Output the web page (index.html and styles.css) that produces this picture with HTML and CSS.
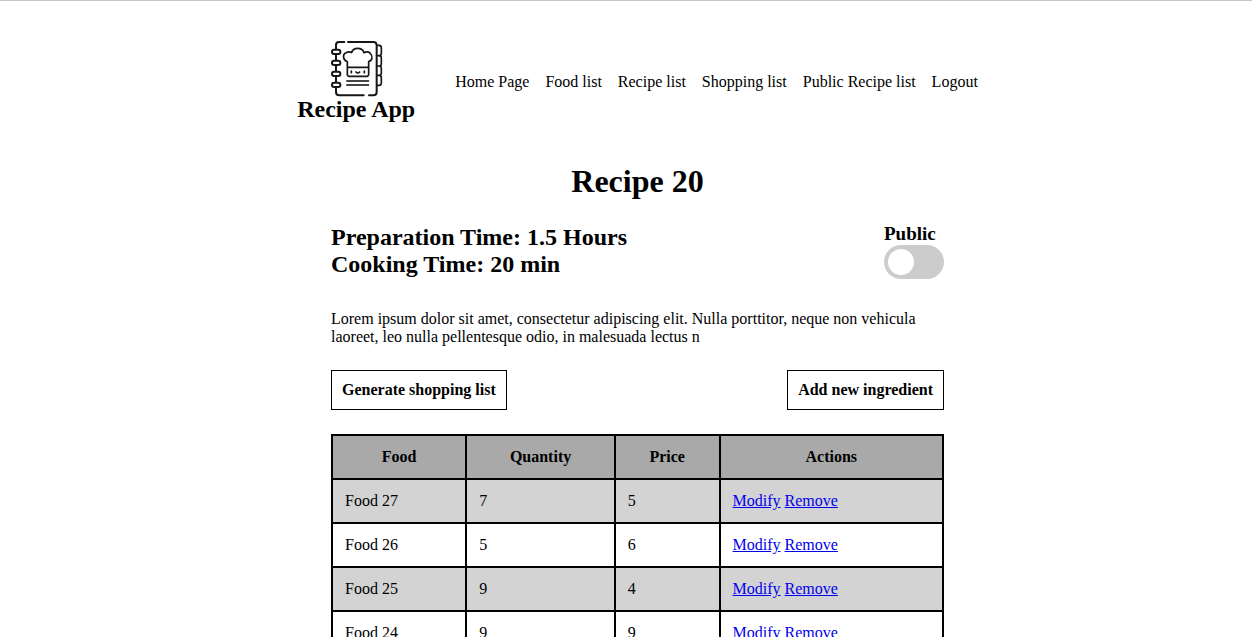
FILE: index.html
```html
<!DOCTYPE html>
<html lang="en">
<head>
<meta charset="utf-8">
<meta name="viewport" content="width=device-width, initial-scale=1">
<title>Recipe App</title>
<link rel="stylesheet" href="styles.css">
</head>
<body>
<header class="site-header">
  <div class="brand">
    <svg class="logo" viewBox="27 15 162 168" aria-hidden="true" fill="none" stroke="#161616" stroke-width="6" stroke-linecap="round" stroke-linejoin="round">
      <path d="M48 42V30Q48 21 57 21H73M84 21H160Q170 21 170 31V171Q170 181 160 181H147M131 181H58Q48 181 48 171V159M48 60V74M48 93V107M48 126V140"/>
      <rect x="36" y="44" width="25" height="13" rx="6"/>
      <rect x="36" y="77" width="25" height="13" rx="6"/>
      <rect x="36" y="110" width="25" height="13" rx="6"/>
      <rect x="36" y="143" width="25" height="13" rx="6"/>
      <path d="M172 31H177Q184 31 184 38V55Q184 62 177 62H172M177 62Q184 62 184 69V86Q184 93 177 93H172M177 93Q184 93 184 100V114Q184 121 177 121H172M177 121Q184 121 184 128V143Q184 151 177 151H172" stroke-width="5"/>
      <path d="M82 98V80C68 75 67 57 78 53Q87 48 95 53C99 36 127 36 132 53Q143 48 150 54C160 64 157 77 146 80V118Q146 124 140 124H88Q82 124 82 118V98M82 97H146" stroke-width="5"/>
      <path d="M94 108V113M133 108V113M108 111Q113 117 119 111" stroke-width="5"/>
      <path d="M81 138H145M81 150H145" stroke="#444" stroke-width="6"/>
    </svg>
    <h2 class="brand-name">Recipe App</h2>
  </div>
  <nav class="site-nav" aria-label="Main">
    <a href="#home">Home Page</a>
    <a href="#foods">Food list</a>
    <a href="#recipes">Recipe list</a>
    <a href="#shopping">Shopping list</a>
    <a href="#public">Public Recipe list</a>
    <a href="#logout">Logout</a>
  </nav>
</header>
<main class="recipe">
  <h1 class="title">Recipe 20</h1>
  <section class="summary">
    <div class="times">
      <h2>Preparation Time: 1.5 Hours</h2>
      <h2>Cooking Time: 20 min</h2>
    </div>
    <div class="visibility">
      <label for="public-toggle">Public</label>
      <input class="switch" type="checkbox" role="switch" id="public-toggle">
    </div>
  </section>
  <p class="description">Lorem ipsum dolor sit amet, consectetur adipiscing elit. Nulla porttitor, neque non vehicula laoreet, leo nulla pellentesque odio, in malesuada lectus n</p>
  <div class="actions">
    <button type="button">Generate shopping list</button>
    <button type="button">Add new ingredient</button>
  </div>
  <table class="ingredients">
    <thead>
      <tr><th scope="col">Food</th><th scope="col">Quantity</th><th scope="col">Price</th><th scope="col">Actions</th></tr>
    </thead>
    <tbody>
      <tr><td>Food 27</td><td>7</td><td>5</td><td><a href="#modify-27">Modify</a> <a href="#remove-27">Remove</a></td></tr>
      <tr><td>Food 26</td><td>5</td><td>6</td><td><a href="#modify-26">Modify</a> <a href="#remove-26">Remove</a></td></tr>
      <tr><td>Food 25</td><td>9</td><td>4</td><td><a href="#modify-25">Modify</a> <a href="#remove-25">Remove</a></td></tr>
      <tr><td>Food 24</td><td>9</td><td>9</td><td><a href="#modify-24">Modify</a> <a href="#remove-24">Remove</a></td></tr>
    </tbody>
  </table>
</main>
</body>
</html>
```
FILE: styles.css
```css
* {
  box-sizing: border-box;
}

body {
  margin: 0;
  padding-left: 23px;
  font: 16px/18px "Liberation Serif", "Times New Roman", serif;
  color: #000;
  background: #fff;
  box-shadow: inset 0 1px #c6c6c6;
}

h1,
h2,
p {
  margin: 0;
}

h2 {
  font-size: 24px;
  line-height: 27px;
}

.site-header {
  display: flex;
  justify-content: center;
  align-items: center;
  gap: 40px;
  padding: 40px 0;
}

.brand {
  display: flex;
  flex-direction: column;
  align-items: center;
}

.logo {
  width: 54px;
  height: 56px;
  overflow: visible;
}

.site-nav {
  display: flex;
  flex-wrap: wrap;
  gap: 16px;
}

.site-nav a {
  color: #000;
  text-decoration: none;
}

.recipe {
  max-width: 613px;
  margin: 0 auto;
}

.title {
  font-size: 32px;
  line-height: 36px;
  text-align: center;
}

.summary {
  display: flex;
  justify-content: space-between;
  align-items: center;
  margin-top: 24px;
}

.visibility {
  display: flex;
  flex-direction: column;
}

.visibility label {
  font-size: 19px;
  line-height: 22px;
  font-weight: bold;
}

.switch {
  appearance: none;
  width: 60px;
  height: 34px;
  margin: 0;
  padding: 4px;
  border-radius: 17px;
  background: #ccc;
  cursor: pointer;
}

.switch::before {
  content: "";
  display: block;
  width: 26px;
  height: 26px;
  border-radius: 50%;
  background: #fff;
}

.switch:checked {
  background: #2196f3;
}

.switch:checked::before {
  margin-left: auto;
}

.description {
  margin-top: 31px;
}

.actions {
  display: flex;
  justify-content: space-between;
  margin: 24px 0;
}

.actions button {
  padding: 10px;
  border: 1px solid #000;
  background: #fff;
  color: #000;
  font: inherit;
  font-weight: bold;
  cursor: pointer;
}

.ingredients {
  width: 100%;
  border-collapse: collapse;
}

.ingredients th,
.ingredients td {
  padding: 12px;
  border: 2px solid #000;
}

.ingredients td {
  text-align: left;
}

.ingredients th {
  background: #a9a9a9;
}

.ingredients tbody tr:nth-child(odd) {
  background: #d3d3d3;
}

.ingredients a {
  color: #00e;
}
```
